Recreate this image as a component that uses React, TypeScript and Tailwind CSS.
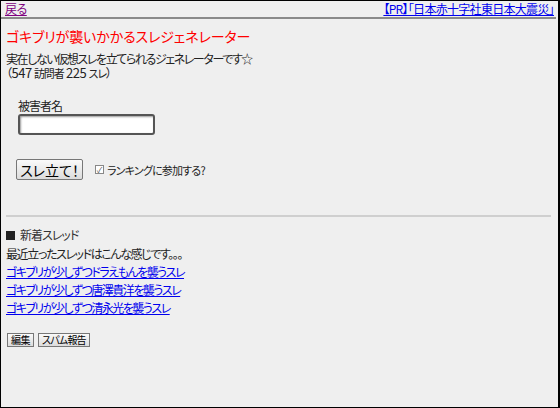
import React from 'react';

const links = [
  'ゴキブリが少しずつドラえもんを襲うスレ',
  'ゴキブリが少しずつ唐澤貴洋を襲うスレ',
  'ゴキブリが少しずつ清永光を襲うスレ',
];

export default function App() {
  return (
    <div className="w-[560px] h-[408px] border border-black border-r-2 bg-[#efefef] text-[#222] overflow-hidden [font-family:'Noto_Sans_CJK_JP',sans-serif] [font-feature-settings:'palt']">
      {/* header links */}
      <div className="flex justify-between items-end h-[18px] pl-[4px] pr-[2px] border-b-2 border-b-[#8a8a8a] mr-[2px] leading-[16px]">
        <a href="#" className="text-[12px] text-[#800080] underline tracking-[-0.5px]">戻る</a>
        <a href="#" className="text-[12px] text-[#0000ee] underline tracking-[-0.7px]">【PR】「日本赤十字社東日本大震災」</a>
      </div>

      <div className="px-[5px]">
        <h1 className="mt-[7px] text-[14px] leading-[20px] text-[#ff0000] tracking-[-0.1px]">ゴキブリが襲いかかるスレジェネレーター</h1>
        <p className="mt-[6px] text-[12px] leading-[14px] tracking-[-1.4px]">実在しない仮想スレを立てられるジェネレーターです☆</p>
        <p className="text-[12px] leading-[13px] tracking-[-0.5px]">
          <span className="inline-block leading-[13px]">（</span>
          <span className="inline-block leading-[13px] text-[13px]">547</span>{' '}
          <span className="inline-block leading-[13px] text-[11px] tracking-[-1px]">訪問者</span>{' '}
          <span className="inline-block leading-[13px] text-[13px]">225</span>{' '}
          <span className="inline-block leading-[13px] text-[11px] tracking-[-1px]">スレ</span>
          <span className="inline-block leading-[13px]">）</span>
        </p>

        {/* form */}
        <div className="mt-[19px] pl-[12px]">
          <label className="block text-[12px] leading-[14px] tracking-[-1px]">被害者名</label>
          <input
            type="text"
            className="mt-[1px] block w-[137px] h-[21px] rounded-[3px] border-2 border-[#555] bg-white shadow-[inset_1px_1px_2px_rgba(0,0,0,0.4)] outline-none"
          />
        </div>

        <div className="mt-[24px] flex items-center pl-[10px]">
          <button className="w-[67px] h-[21px] border border-[#777] rounded-[2px] bg-gradient-to-b from-[#fafafa] to-[#dcdcdc] text-[14px] text-black leading-none">
            スレ立て！
          </button>
          <label className="ml-[12px] flex items-center text-[11px] leading-[14px]">
            <span className="w-[9px] h-[9px] border border-[#888] bg-white text-[8px] text-[#555] flex items-center justify-center leading-none">✓</span>
            <span className="ml-[3px] tracking-[-0.8px]">ランキングに参加する?</span>
          </label>
        </div>

        <hr className="mt-[35px] border-0 border-t-2 border-t-[#cfcfcf] mr-[2px]" />

        {/* recent threads */}
        <div className="mt-[11px] text-[12px] leading-[14px] flex items-center">
          <span className="inline-block w-[9px] h-[9px] bg-[#222] mr-[5px]" />
          <span className="text-[#333] tracking-[-1px]">新着スレッド</span>
        </div>
        <p className="mt-[4px] text-[12px] leading-[16px] tracking-[-1.4px]">最近立ったスレッドはこんな感じです。。。</p>
        <ul className="flex flex-col">
          {links.map((t) => (
            <li key={t} className="leading-[17px]">
              <a href="#" className="text-[12px] text-[#0000ee] underline tracking-[-1.5px]">{t}</a>
            </li>
          ))}
        </ul>

        <div className="mt-[17px] flex gap-[4px] pl-[1px]">
          <button className="h-[14px] px-[3px] border border-[#777] bg-gradient-to-b from-[#fafafa] to-[#dcdcdc] text-[10px] leading-none text-black tracking-[-0.5px]">編集</button>
          <button className="h-[14px] px-[3px] border border-[#777] bg-gradient-to-b from-[#fafafa] to-[#dcdcdc] text-[10px] leading-none text-black tracking-[-0.8px]">スパム報告</button>
        </div>
      </div>
    </div>
  );
}
